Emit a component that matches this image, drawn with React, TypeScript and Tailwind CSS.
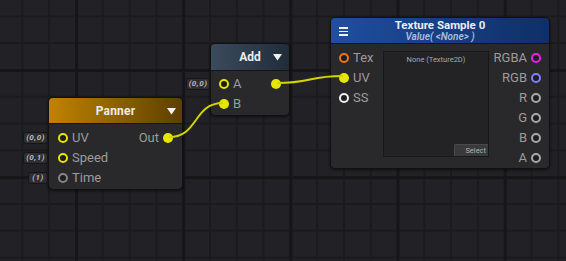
import React from 'react';

type PortKind = 'filled' | 'ring';

const Port: React.FC<{ color: string; kind: PortKind }> = ({ color, kind }) => {
  // color is passed as full class strings so tailwind can see them
  return (
    <span
      className={`inline-block w-[10px] h-[10px] rounded-full shrink-0 ${
        kind === 'filled' ? color : `border-2 bg-[#1e1e20] ${color}`
      }`}
    />
  );
};

const ValueBox: React.FC<{ text: string; w: string }> = ({ text, w }) => (
  <div
    className={`absolute right-full mr-[1px] top-1/2 -translate-y-1/2 h-[12px] ${w} rounded-[3px] bg-[#2e2e31] border border-[#161618] flex items-center justify-center text-[8px] italic font-bold text-[#bdbdbd] tracking-[0.5px]`}
  >
    {text}
  </div>
);

const Caret = () => (
  <svg width="9" height="7" viewBox="0 0 9 7" className="shrink-0">
    <path d="M0 0 H9 L4.5 6.5 Z" fill="#f2f2f2" />
  </svg>
);

const App: React.FC = () => {
  return (
    <div
      className="relative w-[566px] h-[261px] overflow-hidden bg-[#222226] font-['Roboto','Inter',sans-serif] select-none
        bg-[linear-gradient(to_right,#161618_3px,transparent_3px),linear-gradient(to_bottom,#161618_3px,transparent_3px),linear-gradient(to_right,#1b1b1e_2px,transparent_2px),linear-gradient(to_bottom,#1b1b1e_2px,transparent_2px)]
        bg-[size:107.2px_107.2px,107.2px_107.2px,26.8px_26.8px,26.8px_26.8px]
        bg-[position:75px_69px,75px_69px,21.4px_15.4px,21.4px_15.4px]"
    >
      {/* Panner node */}
      <div className="absolute left-[48px] top-[97px] w-[135px] h-[93px] rounded-[5px] border border-[#111113] bg-[#29292c] shadow-[0_1px_3px_rgba(0,0,0,0.6)]">
        <div className="h-[26px] rounded-t-[4px] bg-[linear-gradient(to_right,#c08300,#5c3f00)] flex items-center justify-center relative border-b border-[#141414]">
          <span className="text-[12px] font-bold text-[#ececec] tracking-[0.2px]">Panner</span>
          <div className="absolute right-[6px] top-[10px]">
            <Caret />
          </div>
        </div>
        <div className="pt-1 flex flex-col">
          <div className="relative h-5 flex items-center pl-[9px] pr-[9px]">
            <ValueBox text="(0,0)" w="w-[25px]" />
            <Port color="border-[#e6e600]" kind="ring" />
            <span className="ml-[4px] text-[13px] text-[#9c9c9c]">UV</span>
            <span className="ml-auto mr-[4px] text-[13px] text-[#9c9c9c]">Out</span>
            <Port color="bg-[#e6e600]" kind="filled" />
          </div>
          <div className="relative h-5 flex items-center pl-[9px]">
            <ValueBox text="(0,1)" w="w-[25px]" />
            <Port color="border-[#e6e600]" kind="ring" />
            <span className="ml-[4px] text-[13px] text-[#9c9c9c]">Speed</span>
          </div>
          <div className="relative h-5 flex items-center pl-[9px]">
            <ValueBox text="(1)" w="w-[20px]" />
            <Port color="border-[#858585]" kind="ring" />
            <span className="ml-[4px] text-[13px] text-[#9c9c9c]">Time</span>
          </div>
        </div>
      </div>

      {/* Add node */}
      <div className="absolute left-[210px] top-[43px] w-[80px] h-[73px] rounded-[5px] border border-[#111113] bg-[#29292c] shadow-[0_1px_3px_rgba(0,0,0,0.6)]">
        <div className="h-[27px] rounded-t-[4px] bg-[linear-gradient(to_right,#3b4b5c,#202c3a)] flex items-center justify-center relative border-b border-[#141414]">
          <span className="text-[12px] font-bold text-[#ececec]">Add</span>
          <div className="absolute right-[7px] top-[10px]">
            <Caret />
          </div>
        </div>
        <div className="pt-[3px] flex flex-col">
          <div className="relative h-5 flex items-center pl-[8px] pr-[8px]">
            <ValueBox text="(0,0)" w="w-[24px]" />
            <Port color="border-[#e6e600]" kind="ring" />
            <span className="ml-[4px] text-[13px] text-[#9c9c9c]">A</span>
            <span className="ml-auto" />
            <Port color="bg-[#e6e600]" kind="filled" />
          </div>
          <div className="relative h-5 flex items-center pl-[8px]">
            <Port color="bg-[#e6e600]" kind="filled" />
            <span className="ml-[4px] text-[13px] text-[#9c9c9c]">B</span>
          </div>
        </div>
      </div>

      {/* Texture Sample node */}
      <div className="absolute left-[330px] top-[17px] w-[220px] h-[152px] rounded-[5px] border border-[#111113] bg-[#29292c] shadow-[0_1px_3px_rgba(0,0,0,0.6)]">
        <div className="h-[26px] rounded-t-[4px] bg-[linear-gradient(to_right,#1f4fa0,#0f2f66)] flex flex-col items-center justify-center gap-[1px] relative border-b border-[#141414]">
          <div className="absolute left-[8px] top-[9px] flex flex-col gap-[2px]">
            <span className="block w-[9px] h-[1.5px] bg-[#f0f0f0]" />
            <span className="block w-[9px] h-[1.5px] bg-[#f0f0f0]" />
            <span className="block w-[9px] h-[1.5px] bg-[#f0f0f0]" />
          </div>
          <span className="text-[11.5px] leading-[12px] font-bold text-[#ececec]">Texture Sample 0</span>
          <span className="text-[10px] leading-[10px] italic font-semibold text-[#a9bedc]">Value( &lt;None&gt; )</span>
        </div>
        <div className="flex items-start">
          <div className="w-[52px] pt-1 flex flex-col">
            {[
              { label: 'Tex', cls: 'border-[#f07818]', kind: 'ring' as PortKind },
              { label: 'UV', cls: 'bg-[#e6e600]', kind: 'filled' as PortKind },
              { label: 'SS', cls: 'border-[#f0f0f0]', kind: 'ring' as PortKind },
            ].map((p) => (
              <div key={p.label} className="h-5 flex items-center pl-[8px]">
                <Port color={p.cls} kind={p.kind} />
                <span className="ml-[4px] text-[13px] text-[#9c9c9c]">{p.label}</span>
              </div>
            ))}
          </div>
          <div className="mt-[7px] w-[106px] h-[106px] bg-[#232325] border border-[#18181a] relative flex flex-col items-center">
            <span className="mt-[2px] text-[7.5px] text-[#a8a8a8]">None (Texture2D)</span>
            <div className="absolute right-0 bottom-0 w-[34px] h-[12px] bg-[#3a3a3c] border-t border-l border-[#4a4a4c] rounded-tl-[2px] flex items-center justify-end pr-[2px] text-[7.5px] text-[#b0b0b0]">
              Select
            </div>
          </div>
          <div className="flex-1 pt-1 flex flex-col">
            {[
              { label: 'RGBA', cls: 'border-[#e820e8]' },
              { label: 'RGB', cls: 'border-[#8080ff]' },
              { label: 'R', cls: 'border-[#a8a8a8]' },
              { label: 'G', cls: 'border-[#a8a8a8]' },
              { label: 'B', cls: 'border-[#a8a8a8]' },
              { label: 'A', cls: 'border-[#a8a8a8]' },
            ].map((p) => (
              <div key={p.label} className="h-5 flex items-center justify-end pr-[8px]">
                <span className="mr-[4px] text-[13px] text-[#9c9c9c]">{p.label}</span>
                <Port color={p.cls} kind="ring" />
              </div>
            ))}
          </div>
        </div>
      </div>

      {/* Connections */}
      <svg className="absolute inset-0 pointer-events-none" width="566" height="261">
        <path d="M169 137 C 199 137, 193 103, 223 103" stroke="#d4d400" strokeWidth="2" fill="none" />
        <path d="M277 83 C 312 83, 308 76, 343 76" stroke="#d4d400" strokeWidth="2" fill="none" />
      </svg>
    </div>
  );
};

export default App;
